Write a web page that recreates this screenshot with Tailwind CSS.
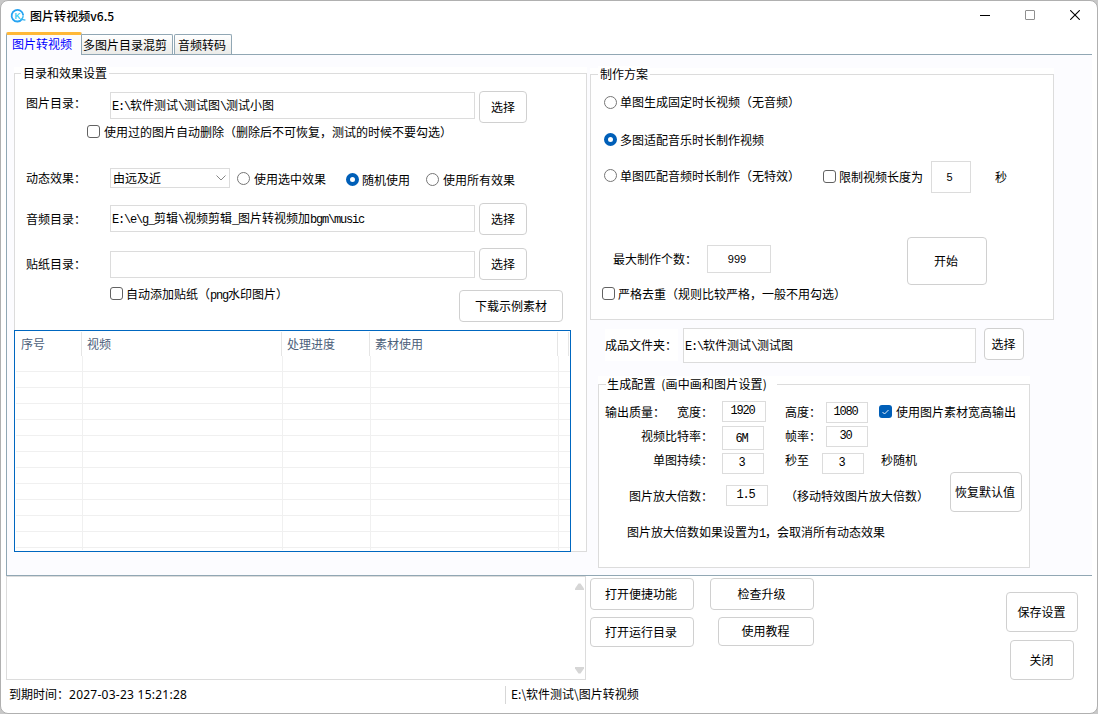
<!DOCTYPE html>
<html lang="zh-CN">

<head>
    <meta charset="UTF-8">
    <meta name="viewport" content="width=device-width, initial-scale=1.0">
    <title>图片转视频v6.5</title>
    <script src="https://cdn.jsdelivr.net/npm/@tailwindcss/browser@4"></script>
</head>

<body class="bg-[#c8c8c8] overflow-hidden">
    <div class="w-[1098px] h-[714px] flex flex-col bg-white border border-[#b0b0b0] rounded-[8px] overflow-hidden text-black text-[12px] leading-[16px] whitespace-nowrap font-['Noto_Sans_CJK_SC',sans-serif]">

        <!-- 标题栏 -->
        <header class="h-[31px] shrink-0 flex items-start">
            <svg class="ml-[9px] mt-[7px]" width="16" height="16" viewBox="0 0 16 16">
                <path d="M12.2 11A5.8 5.8 0 1 1 13.2 7.2" fill="none" stroke="#27a4f2" stroke-width="1.8" />
                <path d="M13.2 7.2C13.3 9 12.6 10.4 11.4 11.4L15.4 12.2" fill="none" stroke="#35b5f0" stroke-width="1.3" />
                <text x="4.6" y="11" font-size="8.5" font-weight="bold" fill="#3cc9f3" font-family="Liberation Sans, sans-serif">K</text>
            </svg>
            <h1 class="ml-[4px] mt-[7px] font-medium tracking-[.05px]">图片转视频v6.5</h1>
            <div class="ml-auto mr-[17px] mt-[9px] flex gap-[35px]">
                <svg width="10" height="10" viewBox="0 0 10 10"><path d="M0 5.5H10" stroke="#000" /></svg>
                <svg width="10" height="10" viewBox="0 0 10 10"><rect x=".5" y=".5" width="9" height="9" rx=".5" fill="none" stroke="#8f8f8f" /></svg>
                <svg width="10" height="10" viewBox="0 0 10 10"><path d="M.2 .2L9.8 9.8M9.8 .2L.2 9.8" stroke="#000" stroke-width="1.1" /></svg>
            </div>
        </header>

        <!-- 选项卡 -->
        <nav class="h-[22px] shrink-0 ml-[5px] flex items-end">
            <div class="w-[76px] h-[23px] relative z-10 -mb-px border-x border-[#91a7b4] border-t-[3px] border-t-[#ffb83a] rounded-t-[2px] bg-[#fcfcff] text-[#0000ff] pl-[5px] pt-px">图片转视频</div>
            <div class="w-[91px] h-[20px] border border-l-0 border-b-0 border-[#91a7b4] rounded-tr-[2px] bg-linear-to-b from-white to-[#ebebe8] pl-[1px] pt-[2px]">多图片目录混剪</div>
            <div class="w-[58px] h-[20px] ml-px border border-b-0 border-[#91a7b4] rounded-t-[2px] bg-linear-to-b from-white to-[#ebebe8] pl-[3px] pt-[2px]">音频转码</div>
        </nav>

        <!-- 主体内容 -->
        <main class="w-[1086px] h-[522px] shrink-0 ml-[5px] flex items-start bg-[#fcfcff] border border-r-0 border-[#91a7b4]">

            <!-- 目录和效果设置 -->
            <section class="w-[573px] ml-[7px] mt-[12px] pt-[6px] bg-white">
                <div class="relative h-[479px] border border-[#dcdcdc]">
                    <h2 class="absolute left-[6px] -top-[9px] bg-white px-[2px]">目录和效果设置</h2>
                    <div class="mt-[17px] h-[32px] flex items-start">
                        <label class="w-[84px] ml-[11px] mt-[4px]">图片目录：</label>
                        <div class="w-[365px] h-[27px] mt-px border border-[#dcdcdc] pl-px pt-[4px]"><span class="font-['Liberation_Mono'] tracking-[-1.2px]">E:\</span>软件测试<span class="font-['Liberation_Mono'] tracking-[-1.2px]">\</span>测试图<span class="font-['Liberation_Mono'] tracking-[-1.2px]">\</span>测试小图</div>
                        <button class="w-[48px] h-[32px] ml-[4px] border border-[#d0d0d0] rounded-[4px]">选择</button>
                    </div>
                    <div class="mt-px h-[16px] flex items-start">
                        <span class="w-[13px] h-[13px] ml-[72px] mt-px border border-[#626262] rounded-[3px]"></span>
                        <span class="ml-[4px]">使用过的图片自动删除（删除后不可恢复，测试的时候不要勾选）</span>
                    </div>
                    <div class="mt-[28px] h-[20px] flex items-start">
                        <label class="w-[84px] ml-[11px] mt-[2px]">动态效果：</label>
                        <div class="w-[120px] h-[20px] flex justify-between items-center border border-[#dcdcdc] pl-[2px] pr-[3px]">
                            <span class="-mt-px">由远及近</span>
                            <svg width="10" height="6" viewBox="0 0 10 6"><path d="M.5 .5L5 5L9.5 .5" fill="none" stroke="#868686" /></svg>
                        </div>
                        <span class="w-[13px] h-[13px] ml-[7px] mt-[4px] border border-[#767676] rounded-full"></span>
                        <span class="ml-[4px] mt-[3px]">使用选中效果</span>
                        <span class="w-[13px] h-[13px] ml-[20px] mt-[5px] border-4 border-[#005fb8] rounded-full"></span>
                        <span class="ml-[3px] mt-[4px]">随机使用</span>
                        <span class="w-[13px] h-[13px] ml-[16px] mt-[5px] border border-[#767676] rounded-full"></span>
                        <span class="ml-[4px] mt-[4px]">使用所有效果</span>
                    </div>
                    <div class="mt-[15px] h-[32px] flex items-start">
                        <label class="w-[84px] ml-[11px] mt-[8px]">音频目录：</label>
                        <div class="w-[365px] h-[27px] mt-[2px] border border-[#dcdcdc] pl-px pt-[4px]"><span class="font-['Liberation_Mono'] tracking-[-1.2px]">E:\e\g_</span>剪辑<span class="font-['Liberation_Mono'] tracking-[-1.2px]">\</span>视频剪辑<span class="font-['Liberation_Mono'] tracking-[-1.2px]">_</span>图片转视频加<span class="font-['Liberation_Mono'] tracking-[-1.2px]">bgm\music</span></div>
                        <button class="w-[48px] h-[32px] ml-[4px] border border-[#d0d0d0] rounded-[4px]">选择</button>
                    </div>
                    <div class="mt-[13px] h-[32px] flex items-start">
                        <label class="w-[84px] ml-[11px] mt-[8px]">贴纸目录：</label>
                        <div class="w-[365px] h-[27px] mt-[3px] border border-[#dcdcdc]"></div>
                        <button class="w-[48px] h-[32px] ml-[4px] border border-[#d0d0d0] rounded-[4px]">选择</button>
                    </div>
                    <div class="mt-[6px] h-[36px] flex items-start">
                        <span class="w-[13px] h-[13px] ml-[95px] mt-px border border-[#626262] rounded-[3px]"></span>
                        <span class="w-[333px] ml-[3px]">自动添加贴纸（<span class="font-['Liberation_Mono'] tracking-[-1.2px]">png</span>水印图片）</span>
                        <button class="w-[104px] h-[32px] mt-[4px] border border-[#d0d0d0] rounded-[4px]">下载示例素材</button>
                    </div>

                    <!-- 任务列表 -->
                    <div class="w-[557px] h-[222px] mt-[8px] -ml-px relative bg-white border border-[#0067c0]">
                        <div class="h-[25px] flex pt-px text-[#4c607a]">
                            <div class="w-[67px] border-r border-[#e5e5e5] pl-[6px] pt-[4px]">序号</div>
                            <div class="w-[200px] border-r border-[#e5e5e5] pl-[5px] pt-[4px]">视频</div>
                            <div class="w-[88px] border-r border-[#e5e5e5] pl-[5px] pt-[4px]">处理进度</div>
                            <div class="w-[188px] border-r border-[#e5e5e5] pl-[5px] pt-[4px]">素材使用</div>
                            <div class="w-[11px] border-r border-[#e5e5e5]"></div>
                        </div>
                        <div id="taskRows" class="ml-px h-[194px] overflow-hidden"></div>
                    </div>
                </div>
            </section>

            <div class="ml-[3px] mt-[13px]">
                <!-- 制作方案 -->
                <section class="w-[464px] pt-[6px] bg-white">
                    <div class="relative h-[246px] border border-[#dcdcdc]">
                        <h2 class="absolute left-[7px] -top-[9px] bg-white px-[2px]">制作方案</h2>
                        <div class="mt-[19px] h-[16px] flex items-start">
                            <span class="w-[13px] h-[13px] ml-[13px] mt-[2px] border border-[#767676] rounded-full"></span>
                            <span class="ml-[3px]">单图生成固定时长视频（无音频）</span>
                        </div>
                        <div class="mt-[22px] h-[16px] flex items-start">
                            <span class="w-[13px] h-[13px] ml-[13px] mt-px border-4 border-[#005fb8] rounded-full"></span>
                            <span class="ml-[3px]">多图适配音乐时长制作视频</span>
                        </div>
                        <div class="mt-[13px] h-[32px] flex items-start">
                            <span class="w-[13px] h-[13px] ml-[13px] mt-[8px] border border-[#767676] rounded-full"></span>
                            <span class="w-[180px] ml-[3px] mt-[7px]">单图匹配音频时长制作（无特效）</span>
                            <span class="w-[13px] h-[13px] ml-[23px] mt-[9px] border border-[#626262] rounded-[3px]"></span>
                            <span class="ml-[3px] mt-[8px]">限制视频长度为</span>
                            <div class="w-[40px] h-[32px] ml-[8px] flex items-center justify-center border border-[#dcdcdc] pr-[3px] text-[11px] font-['Liberation_Sans']">5</div>
                            <span class="ml-[24px] mt-[8px]">秒</span>
                        </div>
                        <div class="mt-[44px] h-[48px] flex items-start">
                            <label class="w-[94px] ml-[22px] mt-[14px]">最大制作个数：</label>
                            <div class="w-[64px] h-[28px] mt-[8px] flex items-center justify-center border border-[#dcdcdc] pr-[4px] text-[11px] font-['Liberation_Sans']">999</div>
                            <button class="w-[80px] h-[48px] ml-[136px] border border-[#d0d0d0] rounded-[4px] pr-[2px]">开始</button>
                        </div>
                        <div class="mt-px h-[16px] flex items-start">
                            <span class="w-[13px] h-[13px] ml-[11px] mt-px border border-[#626262] rounded-[3px]"></span>
                            <span class="ml-[3px]">严格去重（规则比较严格，一般不用勾选）</span>
                        </div>
                    </div>
                </section>

                <!-- 成品文件夹 -->
                <div class="h-[35px] mt-[8px] ml-[15px] flex items-start">
                    <label class="w-[73px] h-[32px] mt-px pt-[8px] bg-white">成品文件夹：</label>
                    <div class="w-[293px] h-[35px] ml-[5px] border border-[#dcdcdc] bg-white pl-px pt-[8px]"><span class="font-['Liberation_Mono'] tracking-[-1.2px]">E:\</span>软件测试<span class="font-['Liberation_Mono'] tracking-[-1.2px]">\</span>测试图</div>
                    <button class="w-[40px] h-[32px] ml-[8px] border border-[#d0d0d0] rounded-[4px] bg-white pr-px">选择</button>
                </div>

                <!-- 生成配置 -->
                <section class="w-[432px] mt-[13px] ml-[8px] pt-[8px] bg-white">
                    <div class="relative h-[184px] border border-[#dcdcdc]">
                        <h2 class="absolute left-[7px] -top-[9px] w-[171px] bg-white pl-px tracking-[.15px]">生成配置&nbsp; (画中画和图片设置)</h2>
                        <div class="mt-[16px] h-[22px] flex items-start">
                            <label class="w-[60px] ml-[6px] mt-[3px]">输出质量：</label>
                            <label class="w-[45px] ml-[12px] mt-[3px]">宽度：</label>
                            <div class="w-[44px] h-[21px] border border-[#dcdcdc] pt-px pr-[3px] text-center tracking-[-1.2px] font-['Liberation_Mono']">1920</div>
                            <label class="w-[41px] ml-[19px] mt-[3px]">高度：</label>
                            <div class="w-[42px] h-[21px] mt-px border border-[#dcdcdc] pt-px pr-[3px] text-center tracking-[-1.2px] font-['Liberation_Mono']">1080</div>
                            <span class="w-[13px] h-[13px] ml-[11px] mt-[4px] flex items-center justify-center bg-[#005fb8] rounded-[3px]">
                                <svg width="7" height="6" viewBox="0 0 7 6"><path d="M.5 3L2.5 5L6.5 1" fill="none" stroke="#fff" stroke-width=".9" /></svg>
                            </span>
                            <span class="ml-[4px] mt-[3px]">使用图片素材宽高输出</span>
                        </div>
                        <div class="mt-[3px] h-[24px] flex items-start">
                            <label class="w-[81px] ml-[42px] mt-[2px]">视频比特率：</label>
                            <div class="w-[42px] h-[24px] border border-[#dcdcdc] pt-[4px] pr-[3px] text-center tracking-[-1.2px] font-['Liberation_Mono']">6M</div>
                            <label class="w-[41px] ml-[21px] mt-[2px]">帧率：</label>
                            <div class="w-[42px] h-[21px] border border-[#dcdcdc] pt-px pr-[3px] text-center tracking-[-1.2px] font-['Liberation_Mono']">30</div>
                        </div>
                        <div class="mt-[3px] h-[19px] flex items-start">
                            <label class="w-[69px] ml-[54px] -mt-px">单图持续：</label>
                            <div class="w-[42px] h-[21px] border border-[#dcdcdc] pt-px pr-[3px] text-center tracking-[-1.2px] font-['Liberation_Mono']">3</div>
                            <label class="w-[37px] ml-[21px] -mt-px">秒至</label>
                            <div class="w-[42px] h-[21px] border border-[#dcdcdc] pt-px pr-[3px] text-center tracking-[-1.2px] font-['Liberation_Mono']">3</div>
                            <label class="ml-[17px] -mt-px">秒随机</label>
                        </div>
                        <div class="h-[40px] flex items-start">
                            <label class="w-[97px] ml-[30px] mt-[16px]">图片放大倍数：</label>
                            <div class="w-[42px] h-[21px] mt-[13px] border border-[#dcdcdc] pt-px pr-[3px] text-center tracking-[-1.2px] font-['Liberation_Mono']">1.5</div>
                            <span class="w-[144px] ml-[17px] mt-[16px]">（移动特效图片放大倍数）</span>
                            <button class="w-[72px] h-[40px] ml-[21px] border border-[#d0d0d0] rounded-[4px] pr-[2px]">恢复默认值</button>
                        </div>
                        <p class="mt-[12px] ml-[28px]">图片放大倍数如果设置为<span class="font-['Liberation_Mono'] tracking-[-1.2px]">1</span>，会取消所有动态效果</p>
                    </div>
                </section>
            </div>
        </main>

        <!-- 日志和操作按钮 -->
        <div class="h-[104px] shrink-0 ml-[5px] flex items-start">
            <div class="w-[580px] h-[104px] flex flex-col items-end justify-between border border-[#dcdcdc] pt-[6px] pb-[5px] pr-px">
                <svg width="9" height="7" viewBox="0 0 9 7"><path d="M0 7V5.5L3.5 .5H5.5L9 5.5V7Z" fill="#d6d6d6" /></svg>
                <svg width="9" height="7" viewBox="0 0 9 7"><path d="M0 0V1.5L3.5 6.5H5.5L9 1.5V0Z" fill="#d6d6d6" /></svg>
            </div>
            <div class="w-[224px] ml-[4px] mt-[2px]">
                <div class="flex gap-[16px]">
                    <button class="w-[104px] h-[32px] border border-[#d0d0d0] rounded-[4px] pr-[2px]">打开便捷功能</button>
                    <button class="w-[104px] h-[32px] border border-[#d0d0d0] rounded-[4px] pr-px">检查升级</button>
                </div>
                <div class="mt-[7px] flex items-start justify-between">
                    <button class="w-[104px] h-[30px] border border-[#d0d0d0] rounded-[4px] pr-[2px]">打开运行目录</button>
                    <button class="w-[96px] h-[29px] border border-[#d0d0d0] rounded-[4px] pr-px pb-px">使用教程</button>
                </div>
            </div>
            <div class="ml-[192px] mt-[16px] flex flex-col items-center gap-[8px]">
                <button class="w-[72px] h-[40px] border border-[#d0d0d0] rounded-[4px] pr-px">保存设置</button>
                <button class="w-[64px] h-[40px] border border-[#d0d0d0] rounded-[4px] pr-px">关闭</button>
            </div>
        </div>

        <!-- 状态栏 -->
        <footer class="flex items-start pt-[6px]">
            <span class="w-[496px] ml-[8px]">到期时间：<span class="font-['Noto_Sans'] tracking-[.25px]">2027-03-23 15:21:28</span></span>
            <span class="h-[18px] border-l border-[#d7d7d7] pl-[5px]">E:\软件测试\图片转视频</span>
        </footer>
    </div>

    <script>
        const taskRows = document.getElementById('taskRows');

        // 空白表格行
        for (let i = 0; i < 13; i++) {
            const row = document.createElement('div');
            row.className = 'h-[16px] flex border-b border-[#f0f0f0]';
            row.innerHTML = `
                <div class="w-[67px] border-r border-[#f0f0f0]"></div>
                <div class="w-[200px] border-r border-[#f0f0f0]"></div>
                <div class="w-[88px] border-r border-[#f0f0f0]"></div>
                <div class="w-[188px] border-r border-[#f0f0f0]"></div>`;
            taskRows.appendChild(row);
        }
    </script>
</body>

</html>
